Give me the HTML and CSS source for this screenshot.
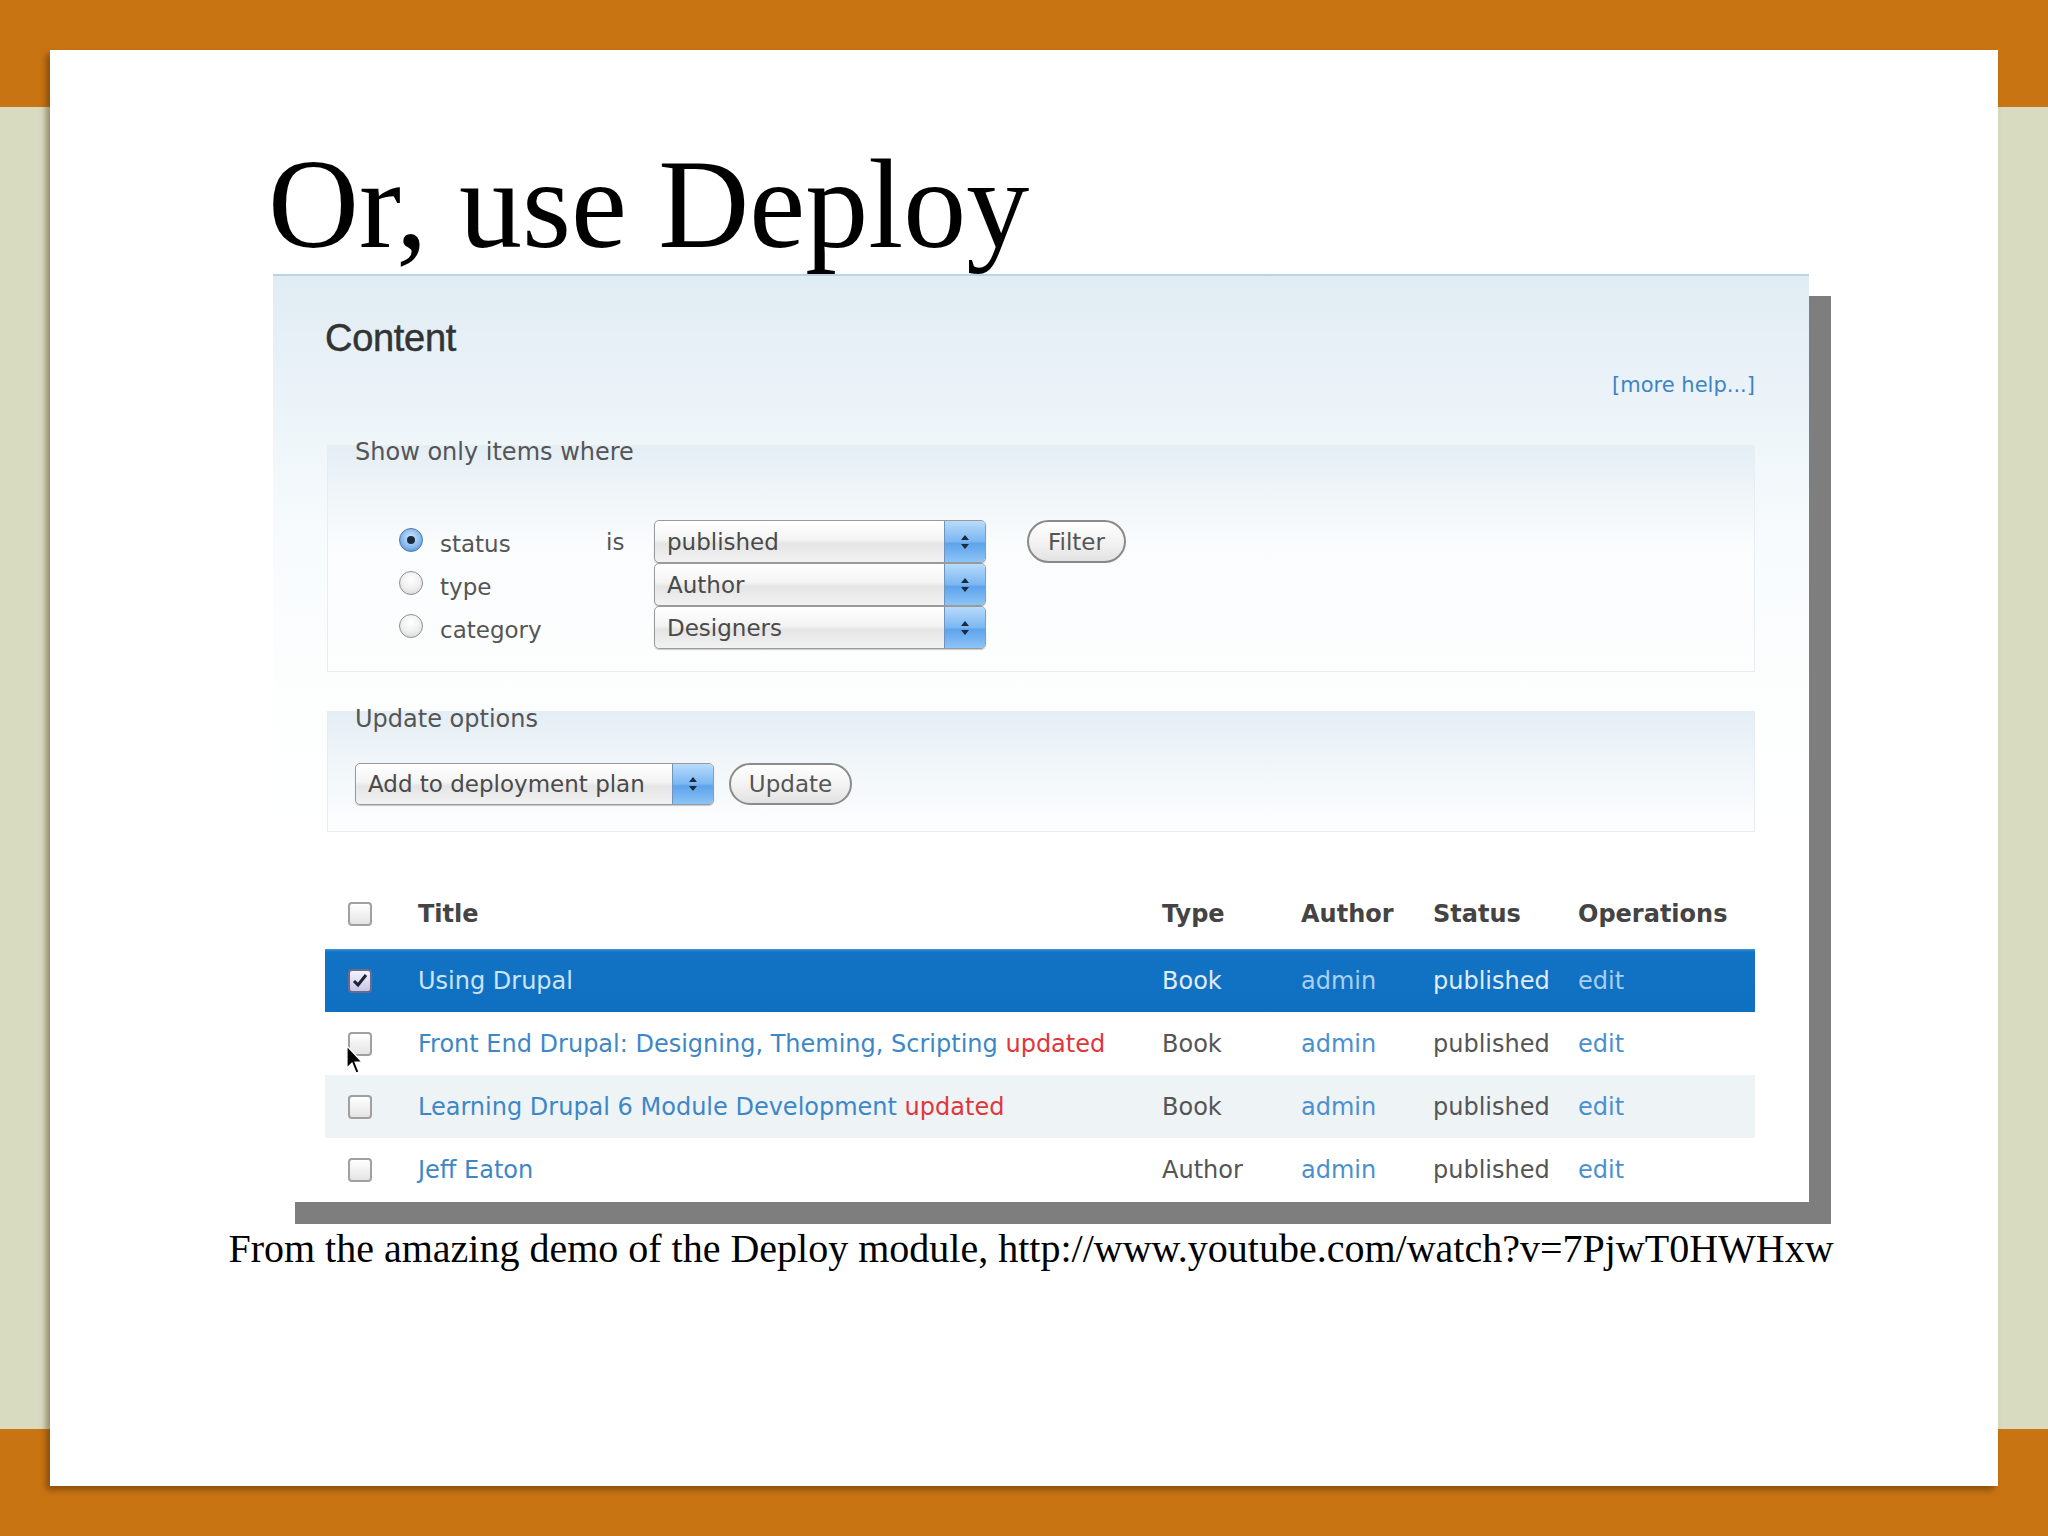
FILE: index.html
```html
<!DOCTYPE html>
<html>
<head>
<meta charset="utf-8">
<link rel="stylesheet" href="styles.css">
</head>
<body>
<div class="card">
  <h1 class="title">Or, use Deploy</h1>
  <div class="shot">
    <h2 class="shot-h">Content</h2>
    <div class="help"><span class="link">[more help...]</span></div>

    <div class="fs fs-filter">
      <div class="legend">Show only items where</div>
      <div class="filter-grid">
        <div class="radio-cell"><span class="radio on"><span class="dot"></span></span><span class="rlabel">status</span></div>
        <div class="is">is</div>
        <div class="select"><span class="sel-text">published</span><span class="sel-arrow"><svg width="12" height="20" viewBox="0 0 12 20"><path d="M6 3 L10 8 L2 8 Z M6 17 L10 12 L2 12 Z" fill="#1c2a3a"/></svg></span></div>
        <div class="btn-cell"><span class="btn">Filter</span></div>

        <div class="radio-cell"><span class="radio"></span><span class="rlabel">type</span></div>
        <div></div>
        <div class="select"><span class="sel-text">Author</span><span class="sel-arrow"><svg width="12" height="20" viewBox="0 0 12 20"><path d="M6 3 L10 8 L2 8 Z M6 17 L10 12 L2 12 Z" fill="#1c2a3a"/></svg></span></div>
        <div></div>

        <div class="radio-cell"><span class="radio"></span><span class="rlabel">category</span></div>
        <div></div>
        <div class="select"><span class="sel-text">Designers</span><span class="sel-arrow"><svg width="12" height="20" viewBox="0 0 12 20"><path d="M6 3 L10 8 L2 8 Z M6 17 L10 12 L2 12 Z" fill="#1c2a3a"/></svg></span></div>
        <div></div>
      </div>
    </div>

    <div class="fs fs-update">
      <div class="legend">Update options</div>
      <div class="update-row">
        <div class="select select-wide"><span class="sel-text">Add to deployment plan</span><span class="sel-arrow"><svg width="12" height="20" viewBox="0 0 12 20"><path d="M6 3 L10 8 L2 8 Z M6 17 L10 12 L2 12 Z" fill="#1c2a3a"/></svg></span></div>
        <span class="btn btn-update">Update</span>
      </div>
    </div>

    <div class="table">
      <div class="row head">
        <div class="cb-cell"><span class="cb"></span></div>
        <div>Title</div>
        <div>Type</div>
        <div>Author</div>
        <div>Status</div>
        <div>Operations</div>
      </div>
      <div class="row sel">
        <div class="cb-cell"><span class="cb checked"><svg width="18" height="18" viewBox="0 0 18 18"><path d="M3 9 L7 13 L15 3" fill="none" stroke="#1b2230" stroke-width="3"/></svg></span></div>
        <div class="t">Using Drupal</div>
        <div class="plain">Book</div>
        <div class="lnk">admin</div>
        <div class="plain">published</div>
        <div class="lnk">edit</div>
      </div>
      <div class="row">
        <div class="cb-cell cursor-host"><span class="cb"></span>
          <svg class="cursor" width="18" height="30" viewBox="0 0 18 30"><path d="M1 1 L1 23 L6 18 L10 28 L13 27 L9 17 L16 17 Z" fill="#000" stroke="#fff" stroke-width="1.2"/></svg>
        </div>
        <div class="t">Front End Drupal: Designing, Theming, Scripting <span class="upd">updated</span></div>
        <div class="plain">Book</div>
        <div class="lnk">admin</div>
        <div class="plain">published</div>
        <div class="lnk">edit</div>
      </div>
      <div class="row alt">
        <div class="cb-cell"><span class="cb"></span></div>
        <div class="t">Learning Drupal 6 Module Development <span class="upd">updated</span></div>
        <div class="plain">Book</div>
        <div class="lnk">admin</div>
        <div class="plain">published</div>
        <div class="lnk">edit</div>
      </div>
      <div class="row">
        <div class="cb-cell"><span class="cb"></span></div>
        <div class="t">Jeff Eaton</div>
        <div class="plain">Author</div>
        <div class="lnk">admin</div>
        <div class="plain">published</div>
        <div class="lnk">edit</div>
      </div>
    </div>
  </div>
  <p class="caption">From the amazing demo of the Deploy module, http://www.youtube.com/watch?v=7PjwT0HWHxw</p>
</div>
</body>
</html>
```
FILE: styles.css
```css
html, body {
  margin: 0;
  padding: 0;
}
body {
  width: 2048px;
  height: 1536px;
  overflow: hidden;
  background: linear-gradient(to bottom, #c97412 0, #c97412 107px, #d9dbc1 107px, #d9dbc1 1429px, #c97412 1429px, #c97412 1536px);
  padding-top: 50px;
  box-sizing: border-box;
}
.card {
  margin-left: 50px;
  width: 1948px;
  height: 1436px;
  background: #fff;
  box-shadow: -4px 4px 6px rgba(60, 40, 0, 0.45);
  padding-top: 91px;
  box-sizing: border-box;
}
.title {
  margin: 0 0 0 218px;
  font-family: "Liberation Serif", "Times New Roman", serif;
  font-weight: normal;
  font-size: 126px;
  line-height: 128px;
  color: #000;
}
.shot {
  margin: 5px 0 0 223px;
  width: 1536px;
  height: 928px;
  box-sizing: border-box;
  padding: 42px 54px 0 52px;
  background: linear-gradient(to bottom, #e0ecf3 0, #ebf3f8 120px, #f7fbfd 260px, #fdfefe 420px, #ffffff 600px);
  border-top: 2px solid #bcd3e3;
  box-shadow: 22px 22px 0 #7e7e7e;
  font-family: "DejaVu Sans", Verdana, sans-serif;
  color: #4a4a4a;
}
.shot-h {
  margin: 0;
  font-family: "Liberation Sans", Arial, sans-serif;
  font-weight: normal;
  font-size: 38px;
  line-height: 40px;
  color: #333;
  letter-spacing: -0.3px;
  -webkit-text-stroke: 0.5px #333;
}
.help {
  margin-top: 14px;
  text-align: right;
  font-size: 21px;
  line-height: 26px;
}
.link {
  color: #3d84c4;
}
.fs {
  margin-left: 2px;
  border: 1px solid #e7eef3;
  background: linear-gradient(to bottom, #e4eef5 0, #eef4f8 40px, #fafcfd 100px, #fdfefe 100%);
}
.legend {
  margin-left: 27px;
  font-size: 24px;
  line-height: 26px;
  color: #555;
}
.fs-filter {
  margin-top: 47px;
  padding: 0 0 22px 71px;
}
.fs-filter .legend {
  margin-left: -44px;
  margin-top: -7px;
}
.filter-grid {
  margin-top: 55px;
  display: grid;
  grid-template-columns: 207px 48px 332px 140px;
  grid-template-rows: 43px 43px 43px;
  font-size: 23px;
  color: #555;
}
.radio-cell {
  display: flex;
  align-items: center;
  gap: 17px;
  margin-top: -4px;
}
.rlabel {
  padding-top: 9px;
}
.radio {
  width: 22px;
  height: 22px;
  border-radius: 50%;
  border: 1px solid #8f8f8f;
  background: radial-gradient(circle at 50% 35%, #ffffff 0, #f0f0f0 50%, #cfcfcf 100%);
  display: flex;
  align-items: center;
  justify-content: center;
  flex: none;
}
.radio.on {
  border-color: #4d79a8;
  background: radial-gradient(circle at 50% 40%, #d6ebff 0, #7fb4ea 60%, #3f7fc4 100%);
}
.dot {
  width: 8px;
  height: 8px;
  border-radius: 50%;
  background: #1b2a3c;
}
.is {
  display: flex;
  align-items: center;
}
.select {
  display: flex;
  align-items: stretch;
  border: 1px solid #9a9a9a;
  border-radius: 5px;
  overflow: hidden;
  background: linear-gradient(to bottom, #ffffff 0, #f4f4f4 45%, #e5e5e5 55%, #f2f2f2 100%);
  box-shadow: 0 1px 1px rgba(0,0,0,0.2);
  color: #4a4a4a;
  font-size: 23px;
}
.sel-text {
  flex: 1;
  display: flex;
  align-items: center;
  padding-left: 12px;
  white-space: nowrap;
}
.sel-arrow {
  width: 40px;
  flex: none;
  display: flex;
  align-items: center;
  justify-content: center;
  background: linear-gradient(to bottom, #b8dbfb 0, #7ab7f2 50%, #5ea3eb 55%, #8cc4f6 100%);
  border-left: 1px solid #6f95bf;
}
.btn-cell {
  display: flex;
  align-items: stretch;
  padding-left: 41px;
}
.btn {
  display: flex;
  align-items: center;
  justify-content: center;
  border: 2px solid #8a8a8a;
  border-radius: 22px;
  background: linear-gradient(to bottom, #ffffff 0, #f3f3f3 50%, #e2e2e2 100%);
  color: #555;
  font-size: 23px;
  box-sizing: border-box;
  width: 99px;
}
.fs-update {
  margin-top: 39px;
  padding: 0 0 26px 27px;
}
.fs-update .legend {
  margin-left: 0;
  margin-top: -6px;
}
.update-row {
  margin-top: 31px;
  display: flex;
  gap: 15px;
  height: 42px;
}
.select-wide {
  width: 359px;
  box-sizing: border-box;
}
.btn-update {
  width: 123px;
}
.table {
  margin-top: 47px;
}
.row {
  display: grid;
  grid-template-columns: 93px 744px 139px 132px 145px 1fr;
  height: 63px;
  align-items: center;
  font-size: 24px;
  color: #555;
}
.row.head {
  height: 70px;
  font-weight: bold;
  color: #444;
}
.row.sel {
  background: linear-gradient(to bottom, #3d93d8 0, #1273c4 3px, #0f70c1 100%);
  color: #d7e8f7;
}
.row.alt {
  background: #eef3f6;
}
.cb-cell {
  padding-left: 23px;
  display: flex;
  align-items: center;
}
.cursor-host {
  position: relative;
}
.cb {
  width: 20px;
  height: 20px;
  border: 2px solid #a0a0a0;
  border-radius: 4px;
  background: linear-gradient(to bottom, #ffffff, #e4e4e4);
  display: flex;
  align-items: center;
  justify-content: center;
}
.cb.checked {
  background: linear-gradient(to bottom, #f2f2ff, #c9c6e6);
  border-color: #6a6a8a;
}
.cursor {
  position: absolute;
  left: 21px;
  top: 13px;
}
.t {
  color: #3d87c6;
}
.sel .t {
  color: #cde3f6;
}
.upd {
  color: #e0363a;
}
.lnk {
  color: #4a90cf;
}
.sel .lnk {
  color: #a9cff1;
}
.sel .plain {
  color: #e0ecf8;
}
.caption {
  margin: 25px 0 0 0;
  font-family: "Liberation Serif", "Times New Roman", serif;
  font-size: 40px;
  line-height: 44px;
  text-align: center;
  color: #000;
  padding-left: 14px;
}
```
